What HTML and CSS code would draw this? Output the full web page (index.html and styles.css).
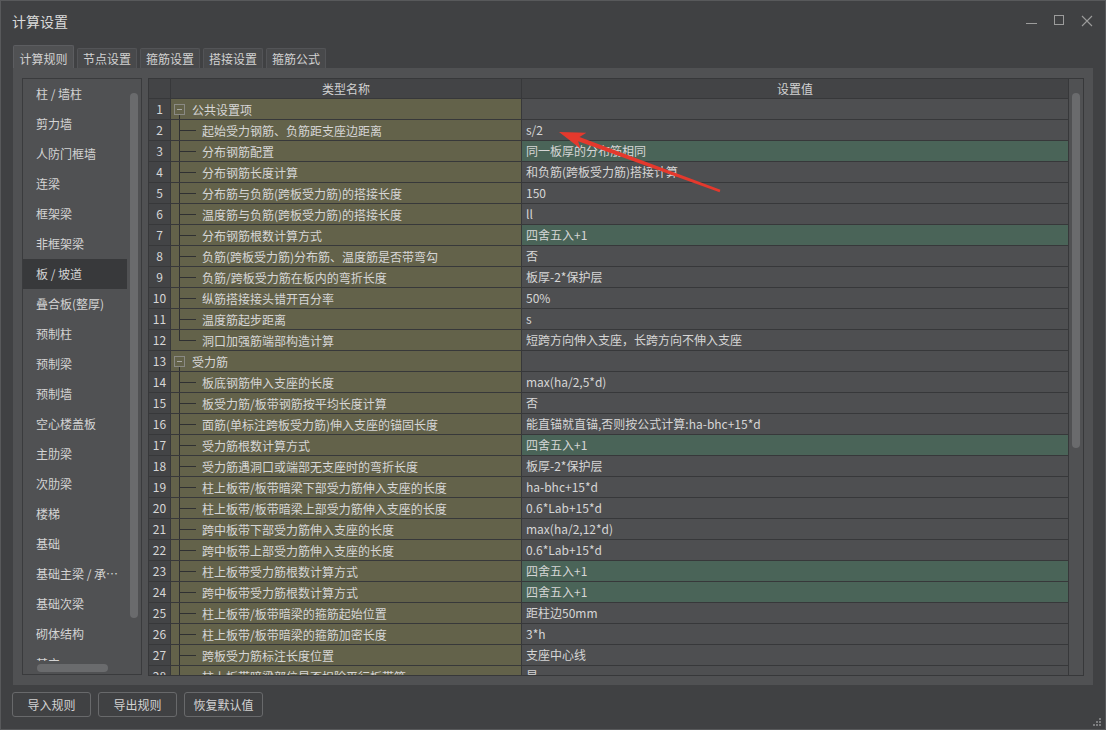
FILE: index.html
```html
<!DOCTYPE html>
<html lang="zh-CN">
<head>
<meta charset="utf-8">
<title>计算设置</title>
<link rel="stylesheet" href="styles.css">
</head>
<body>
<div class="window">
  <div class="titlebar">
    <span class="title">计算设置</span>
    <div class="controls">
      <span class="ctl"><svg width="12" height="12" viewBox="0 0 12 12"><path d="M1 8.5h11" stroke="#9c9c9c" stroke-width="1"/></svg></span>
      <span class="ctl"><svg width="12" height="12" viewBox="0 0 12 12"><rect x="1.5" y="0.5" width="9" height="9" fill="none" stroke="#9c9c9c"/></svg></span>
      <span class="ctl"><svg width="12" height="12" viewBox="0 0 12 12"><path d="M1 1L11 11M11 1L1 11" stroke="#9c9c9c" stroke-width="1.1"/></svg></span>
    </div>
  </div>

  <div class="tabs">
    <div class="tab active">计算规则</div>
    <div class="tab">节点设置</div>
    <div class="tab">箍筋设置</div>
    <div class="tab">搭接设置</div>
    <div class="tab">箍筋公式</div>
  </div>

  <div class="pane">
    <div class="list">
      <div class="list-body">
        <div class="items">
          <div class="item">柱 / 墙柱</div>
          <div class="item">剪力墙</div>
          <div class="item">人防门框墙</div>
          <div class="item">连梁</div>
          <div class="item">框架梁</div>
          <div class="item">非框架梁</div>
          <div class="item selected">板 / 坡道</div>
          <div class="item">叠合板(整厚)</div>
          <div class="item">预制柱</div>
          <div class="item">预制梁</div>
          <div class="item">预制墙</div>
          <div class="item">空心楼盖板</div>
          <div class="item">主肋梁</div>
          <div class="item">次肋梁</div>
          <div class="item">楼梯</div>
          <div class="item">基础</div>
          <div class="item">基础主梁 / 承台梁</div>
          <div class="item">基础次梁</div>
          <div class="item">砌体结构</div>
          <div class="item">其它</div>
        </div>
        <div class="vtrack small"><div class="vthumb list-thumb"></div></div>
      </div>
      <div class="htrack"><div class="hthumb"></div></div>
    </div>

    <div class="table">
      <div class="grid">
        <div class="thead">
          <div class="num"></div>
          <div class="h1">类型名称</div>
          <div class="h2">设置值</div>
        </div>
        <div class="tbody">
          <div class="row"><div class="num">1</div><div class="c1 parent"><i class="tog"></i>公共设置项</div><div class="c2"></div></div>
          <div class="row"><div class="num">2</div><div class="c1"><i class="br"></i>起始受力钢筋、负筋距支座边距离</div><div class="c2">s/2</div></div>
          <div class="row"><div class="num">3</div><div class="c1"><i class="br"></i>分布钢筋配置</div><div class="c2 hl">同一板厚的分布筋相同</div></div>
          <div class="row"><div class="num">4</div><div class="c1"><i class="br"></i>分布钢筋长度计算</div><div class="c2">和负筋(跨板受力筋)搭接计算</div></div>
          <div class="row"><div class="num">5</div><div class="c1"><i class="br"></i>分布筋与负筋(跨板受力筋)的搭接长度</div><div class="c2">150</div></div>
          <div class="row"><div class="num">6</div><div class="c1"><i class="br"></i>温度筋与负筋(跨板受力筋)的搭接长度</div><div class="c2">ll</div></div>
          <div class="row"><div class="num">7</div><div class="c1"><i class="br"></i>分布钢筋根数计算方式</div><div class="c2 hl">四舍五入+1</div></div>
          <div class="row"><div class="num">8</div><div class="c1"><i class="br"></i>负筋(跨板受力筋)分布筋、温度筋是否带弯勾</div><div class="c2">否</div></div>
          <div class="row"><div class="num">9</div><div class="c1"><i class="br"></i>负筋/跨板受力筋在板内的弯折长度</div><div class="c2">板厚-2*保护层</div></div>
          <div class="row"><div class="num">10</div><div class="c1"><i class="br"></i>纵筋搭接接头错开百分率</div><div class="c2">50%</div></div>
          <div class="row"><div class="num">11</div><div class="c1"><i class="br"></i>温度筋起步距离</div><div class="c2">s</div></div>
          <div class="row"><div class="num">12</div><div class="c1"><i class="br last"></i>洞口加强筋端部构造计算</div><div class="c2">短跨方向伸入支座，长跨方向不伸入支座</div></div>
          <div class="row"><div class="num">13</div><div class="c1 parent"><i class="tog"></i>受力筋</div><div class="c2"></div></div>
          <div class="row"><div class="num">14</div><div class="c1"><i class="br"></i>板底钢筋伸入支座的长度</div><div class="c2">max(ha/2,5*d)</div></div>
          <div class="row"><div class="num">15</div><div class="c1"><i class="br"></i>板受力筋/板带钢筋按平均长度计算</div><div class="c2">否</div></div>
          <div class="row"><div class="num">16</div><div class="c1"><i class="br"></i>面筋(单标注跨板受力筋)伸入支座的锚固长度</div><div class="c2">能直锚就直锚,否则按公式计算:ha-bhc+15*d</div></div>
          <div class="row"><div class="num">17</div><div class="c1"><i class="br"></i>受力筋根数计算方式</div><div class="c2 hl">四舍五入+1</div></div>
          <div class="row"><div class="num">18</div><div class="c1"><i class="br"></i>受力筋遇洞口或端部无支座时的弯折长度</div><div class="c2">板厚-2*保护层</div></div>
          <div class="row"><div class="num">19</div><div class="c1"><i class="br"></i>柱上板带/板带暗梁下部受力筋伸入支座的长度</div><div class="c2">ha-bhc+15*d</div></div>
          <div class="row"><div class="num">20</div><div class="c1"><i class="br"></i>柱上板带/板带暗梁上部受力筋伸入支座的长度</div><div class="c2">0.6*Lab+15*d</div></div>
          <div class="row"><div class="num">21</div><div class="c1"><i class="br"></i>跨中板带下部受力筋伸入支座的长度</div><div class="c2">max(ha/2,12*d)</div></div>
          <div class="row"><div class="num">22</div><div class="c1"><i class="br"></i>跨中板带上部受力筋伸入支座的长度</div><div class="c2">0.6*Lab+15*d</div></div>
          <div class="row"><div class="num">23</div><div class="c1"><i class="br"></i>柱上板带受力筋根数计算方式</div><div class="c2 hl">四舍五入+1</div></div>
          <div class="row"><div class="num">24</div><div class="c1"><i class="br"></i>跨中板带受力筋根数计算方式</div><div class="c2 hl">四舍五入+1</div></div>
          <div class="row"><div class="num">25</div><div class="c1"><i class="br"></i>柱上板带/板带暗梁的箍筋起始位置</div><div class="c2">距柱边50mm</div></div>
          <div class="row"><div class="num">26</div><div class="c1"><i class="br"></i>柱上板带/板带暗梁的箍筋加密长度</div><div class="c2">3*h</div></div>
          <div class="row"><div class="num">27</div><div class="c1"><i class="br"></i>跨板受力筋标注长度位置</div><div class="c2">支座中心线</div></div>
          <div class="row"><div class="num">28</div><div class="c1"><i class="br"></i>柱上板带暗梁部位是否扣除平行板带筋</div><div class="c2">是</div></div>
        </div>
      </div>
      <div class="vtrack"><div class="vthumb table-thumb"></div></div>
    </div>
  </div>

  <div class="footer">
    <div class="btn">导入规则</div>
    <div class="btn">导出规则</div>
    <div class="btn">恢复默认值</div>
  </div>

  <svg class="grip" width="9" height="9" viewBox="0 0 9 9">
    <rect x="6" y="0" width="2" height="2" fill="#7c7d7f"/>
    <rect x="3" y="3" width="2" height="2" fill="#7c7d7f"/>
    <rect x="6" y="3" width="2" height="2" fill="#7c7d7f"/>
    <rect x="0" y="6" width="2" height="2" fill="#7c7d7f"/>
    <rect x="3" y="6" width="2" height="2" fill="#7c7d7f"/>
    <rect x="6" y="6" width="2" height="2" fill="#7c7d7f"/>
  </svg>

  <svg class="annotation" width="1106" height="730" viewBox="0 0 1106 730">
    <polygon points="559,132 586.4,132.8 579.5,137.0 720.4,189.8 719.6,192.2 578.1,141.2 580.6,148.8" fill="#e4392d"/>
  </svg>
</div>
</body>
</html>
```
FILE: styles.css
```css
* { box-sizing: border-box; }
html, body { margin: 0; padding: 0; }
body {
  width: 1106px;
  height: 730px;
  overflow: hidden;
  background: #404143;
  font-family: "Noto Sans CJK SC", "Noto Sans", sans-serif;
  font-size: 12px;
  color: #d6d6d6;
}
.window {
  position: relative;
  width: 1106px;
  height: 730px;
  border: 1px solid #58595b;
  background: #404143;
  display: flex;
  flex-direction: column;
}
.titlebar {
  height: 39px;
  flex: none;
  display: flex;
  align-items: center;
  justify-content: space-between;
  padding: 0 4px 0 11px;
}
.title { font-size: 14px; line-height: 20px; color: #dadada; }
.controls { display: flex; }
.ctl { width: 28px; height: 28px; display: flex; align-items: center; justify-content: center; }

.tabs {
  flex: none;
  height: 23px;
  margin-top: 5px;
  padding-left: 12px;
  display: flex;
  align-items: flex-end;
  gap: 3px;
}
.tab {
  width: 60px;
  height: 20px;
  background: #48494b;
  border: 1px solid #535457;
  border-bottom: none;
  border-radius: 2px 2px 0 0;
  text-align: center;
  line-height: 19px;
  color: #d2d2d2;
  white-space: nowrap;
}
.tab.active {
  width: 61px;
  height: 23px;
  background: #505153;
  border-color: #5c5d60;
  padding-top: 3px;
  line-height: 19px;
}

.pane {
  flex: none;
  margin: 0 12px;
  height: 617px;
  background: #505153;
  display: flex;
  align-items: flex-start;
  gap: 6px;
  padding: 10px 9px;
}

/* left list */
.list {
  width: 120px;
  height: 597px;
  flex: none;
  border: 1px solid #3a3b3d;
  background: #505153;
  display: flex;
  flex-direction: column;
}
.list-body { flex: 1; display: flex; overflow: hidden; min-height: 0; }
.items { width: 104px; flex: none; overflow: hidden; }
.item {
  height: 30px;
  line-height: 30px;
  padding-left: 13px;
  white-space: nowrap;
  overflow: hidden;
  text-overflow: ellipsis;
  color: #d4d4d4;
}
.item.selected { background: #38393b; }
.vtrack { width: 15px; flex: none; background: #505153; border-left: 1px solid #37383a; }
.vtrack.small { width: 14px; border-left: none; }
.vthumb { width: 8px; margin-left: 3px; border-radius: 4px; background: #6a6b6d; }
.list-thumb { margin-top: 14px; height: 525px; }
.table-thumb { margin-top: 14px; height: 355px; }
.htrack { height: 13px; flex: none; }
.hthumb { margin: 3px 0 0 14px; width: 71px; height: 8px; border-radius: 4px; background: #6a6b6d; }

/* table */
.table {
  width: 936px;
  height: 598px;
  flex: none;
  border: 1px solid #37383a;
  display: flex;
}
.grid { flex: 1; display: flex; flex-direction: column; overflow: hidden; }
.thead {
  flex: none;
  height: 20px;
  display: flex;
  background: #434446;
  border-bottom: 1px solid #37383a;
  line-height: 19px;
  color: #d2d2d2;
}
.thead .h1 { width: 351px; border-right: 1px solid #37383a; text-align: center; }
.thead .h2 { flex: 1; text-align: center; }
.tbody { flex: 1; overflow: hidden; }
.row { display: flex; height: 21px; border-bottom: 1px solid #37383a; }
.num {
  width: 22px;
  flex: none;
  border-right: 1px solid #37383a;
  background: #434446;
  text-align: center;
  line-height: 20px;
}
.c1 {
  width: 351px;
  flex: none;
  border-right: 1px solid #37383a;
  background: #63624a;
  display: flex;
  align-items: center;
  white-space: nowrap;
  overflow: hidden;
}
.c1.parent {
  background: linear-gradient(#2f3032, #2f3032) 8px 100% / 1px 50% no-repeat, #63624a;
}
.c2 {
  flex: 1;
  background: #4e4f51;
  padding-left: 4px;
  line-height: 20px;
  white-space: nowrap;
  overflow: hidden;
}
.c2.hl { background: #4a6458; }
.br {
  align-self: stretch;
  flex: none;
  width: 17px;
  margin: 0 6px 0 8px;
  background:
    linear-gradient(#2f3032, #2f3032) 0 0 / 1px 100% no-repeat,
    linear-gradient(#2f3032, #2f3032) 0 50% / 100% 1px no-repeat;
}
.br.last {
  background:
    linear-gradient(#2f3032, #2f3032) 0 0 / 1px 50% no-repeat,
    linear-gradient(#2f3032, #2f3032) 0 50% / 100% 1px no-repeat;
}
.tog {
  flex: none;
  width: 11px;
  height: 11px;
  margin: 0 7px 0 3px;
  border: 1px solid #8a8a84;
  background: linear-gradient(#a8a8a4, #a8a8a4) center / 5px 1px no-repeat, #63624a;
}

.footer { flex: none; display: flex; gap: 7px; padding: 7px 0 0 11px; }
.btn {
  width: 79px;
  height: 25px;
  border: 1px solid #68696b;
  border-radius: 3px;
  display: flex;
  align-items: center;
  justify-content: center;
  color: #d2d2d2;
}

.grip { position: absolute; right: 3px; bottom: 2px; }
.annotation { position: absolute; left: -1px; top: -1px; pointer-events: none; }
```
